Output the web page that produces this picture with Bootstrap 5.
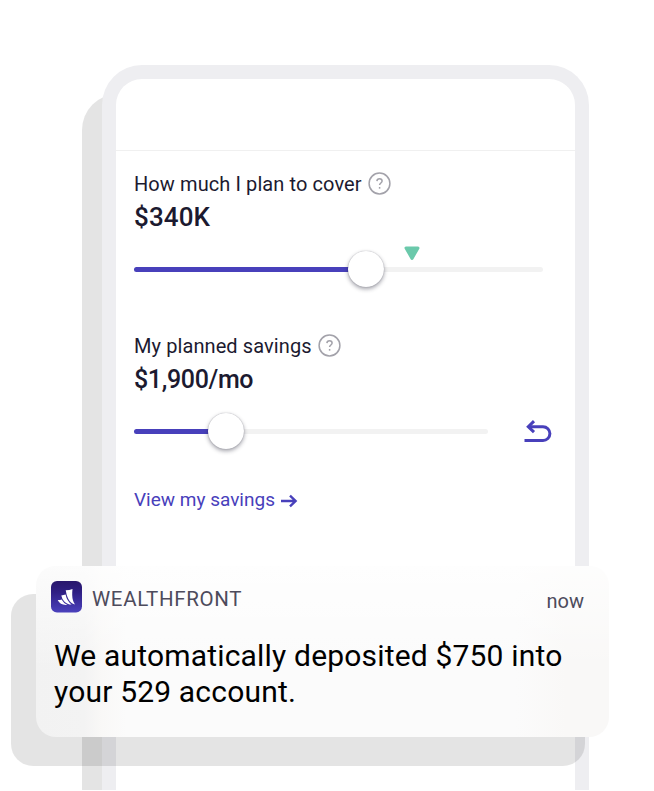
<!DOCTYPE html>
<html lang="en">
<head>
<meta charset="utf-8">
<meta name="viewport" content="width=device-width, initial-scale=1">
<title>Wealthfront savings plan</title>
<link href="https://cdn.jsdelivr.net/npm/bootstrap@5.3.0/dist/css/bootstrap.min.css" rel="stylesheet">
<style>
body { background: #fff; font-family: Roboto, "Liberation Sans", sans-serif; color: #1c1a30; }
.stage { width: 654px; height: 791px; padding: 65px 65px 0 102px; }
.phone { height: 725px; border: 14px solid #eeeef1; border-bottom: 0; border-radius: 40px 40px 0 0; background: #fff; z-index: 1; }
.phone-shade { left: 82px; top: 94px; width: 60px; height: 696px; border-radius: 36px 0 0 0; background: #e4e4e4; }
.phone-head { height: 72px; border-bottom: 1px solid #f0f0f0 !important; }
.phone-body { padding: 20px 32px 0 18px; }
.field-label { font-size: 20px; line-height: 26px; letter-spacing: .09px; white-space: nowrap; }
.field-value { font-size: 25px; line-height: 32px; font-weight: 500; margin-top: 5px; white-space: nowrap; }
.value-a { font-size: 26px; letter-spacing: .1px; margin-top: 4px; margin-bottom: 1px; }
.value-b { letter-spacing: -.35px; }
.help { width: 23px; height: 23px; margin: -2px 0 0 6px; }
.slider { height: 38px; }
.slider-a { margin-top: 16px; }
.value-a + .slider-a { margin-top: 17px; }
.value-a { margin-bottom: 0; }
.slider-b { width: 354px; }
.rail { height: 5px; border-radius: 3px; background: #f2f2f2; }
.fill { height: 5px; border-radius: 3px; background: #4840bb; }
.knob { width: 36px; height: 36px; top: 1px; margin-left: -18px; background: #fff; box-shadow: 0 2px 4px rgba(30,30,50,.42), 0 0 1px rgba(30,30,50,.4); }
.target { left: 269.5px; top: -4.500px; width: 16px; height: 15px; }
.group-b { margin-top: 45px; }
.undo { margin-right: -9px; }
.more { font-size: 19px; line-height: 26px; color: #4840bb; margin-top: 37px; }
.more-arrow { margin: 2px 0 0 6px; }
.note-shade { left: 11px; top: 594px; width: 574px; height: 172px; border-radius: 22px; background: rgba(0,0,0,.105); z-index: 2; }
.note { left: 36px; top: 566px; width: 573px; height: 171px; border-radius: 20px; z-index: 3; padding: 15px 25px 0 15px; color: #000;
  background: linear-gradient(180deg, rgba(255,255,255,.75) 0, rgba(255,255,255,0) 60%), linear-gradient(90deg, #f2f2f2 0, #f3f3f3 48px, #f9f8f7 66px, #fbfbfb 90px, #fbfbfb 480px, #f9f8f7 530px, #f9f8f7 573px); }
.brand { font-size: 20.5px; line-height: 24px; letter-spacing: .65px; color: #4d4b5c; margin-left: 10px; margin-top: 6px; }
.when { font-size: 20px; line-height: 24px; color: #4d4b5c; margin-top: 8px; }
.message { font-size: 30px; line-height: 36px; letter-spacing: .18px; margin: 25px 0 0 3px; white-space: nowrap; }
svg { display: block; flex: none; }
</style>
<script src="https://cdn.jsdelivr.net/npm/bootstrap@5.3.0/dist/js/bootstrap.bundle.min.js"></script>
</head>
<body class="m-0 overflow-hidden">
<main class="stage position-relative overflow-hidden">
  <div class="phone-shade position-absolute"></div>
  <section class="phone position-relative">
    <header class="phone-head border-bottom"></header>
    <div class="phone-body">
      <div>
        <div class="d-flex align-items-center">
          <span class="field-label">How much I plan to cover</span>
          <svg class="help" viewBox="0 0 23 23" fill="none" stroke="#a3a2aa" stroke-width="1.5"><circle cx="11.5" cy="11.5" r="10.4"/><path d="M8.9 9.1C9 7.5 10 6.7 11.5 6.7s2.6.9 2.6 2.300c0 2-2.5 2-2.5 4.1"/><path d="M11.6 15v1.700"/></svg>
        </div>
        <div class="field-value value-a">$340K</div>
        <div class="slider slider-a position-relative d-flex align-items-center">
          <div class="rail w-100"><div class="fill" style="width:56.7%"></div></div>
          <div class="knob position-absolute rounded-circle" style="left:56.7%"></div>
          <svg class="target position-absolute" viewBox="0 0 16 15"><path d="M2 2h12L8 12.500z" fill="#6bc9ab" stroke="#6bc9ab" stroke-width="3" stroke-linejoin="round"/></svg>
        </div>
      </div>
      <div class="group-b">
        <div class="d-flex align-items-center">
          <span class="field-label">My planned savings</span>
          <svg class="help" viewBox="0 0 23 23" fill="none" stroke="#a3a2aa" stroke-width="1.5"><circle cx="11.5" cy="11.5" r="10.4"/><path d="M8.9 9.1C9 7.5 10 6.7 11.5 6.7s2.6.9 2.6 2.300c0 2-2.5 2-2.5 4.1"/><path d="M11.6 15v1.700"/></svg>
        </div>
        <div class="field-value value-b">$1,900/mo</div>
        <div class="d-flex slider-a">
          <div class="slider slider-b position-relative d-flex align-items-center">
            <div class="rail w-100"><div class="fill" style="width:26%"></div></div>
            <div class="knob position-absolute rounded-circle" style="left:26.1%"></div>
          </div>
          <svg class="undo ms-auto" width="28" height="38" viewBox="0 0 28 38" fill="none" stroke="#4840bb" stroke-width="3"><path d="M.5 28.500h18.500a6.700 6.700 0 0 0 0-13.800H5"/><path d="M10 9.200 4.300 14.700 10 20.200"/></svg>
        </div>
      </div>
      <div class="more d-flex align-items-center">
        <span>View my savings</span>
        <svg class="more-arrow" width="17" height="14" viewBox="0 0 17 14" fill="none" stroke="#4840bb" stroke-width="2.4"><path d="M0 7h15M9 1.600 14.600 7 9 12.400"/></svg>
      </div>
    </div>
  </section>
  <div class="note-shade position-absolute"></div>
  <aside class="note position-absolute">
    <div class="d-flex align-items-start">
      <svg width="31" height="32" viewBox="0 0 31 32">
        <defs><linearGradient id="g" x1="0" y1="0" x2="0" y2="1"><stop offset="0" stop-color="#28166b"/><stop offset=".35" stop-color="#2f1f83"/><stop offset="1" stop-color="#4b41bd"/></linearGradient></defs>
        <rect width="31" height="31.500" rx="6" fill="url(#g)"/>
        <g fill="#fff"><path d="M14.700 9.200Q18.500 9.200 21.500 8Q20.700 15 21.900 19Q22.500 21.500 24 23.600Q19.500 22.500 17.100 17.500Q15.400 14 14.700 9.200z"/><path d="M10.300 14.400Q12.600 14.400 14.600 13.600Q15.800 20 20.600 23.600Q16.200 23.500 13.300 20.400Q11 18 10.300 14.400z"/><path d="M6.700 19.100Q8.900 19.200 10.600 18.500Q12.300 22 16.400 23.900Q9.300 24.600 6.700 19.100z"/></g>
      </svg>
      <span class="brand">WEALTHFRONT</span>
      <span class="when ms-auto">now</span>
    </div>
    <div class="message">We automatically deposited $750 into<br>your 529 account.</div>
  </aside>
</main>
</body>
</html>
